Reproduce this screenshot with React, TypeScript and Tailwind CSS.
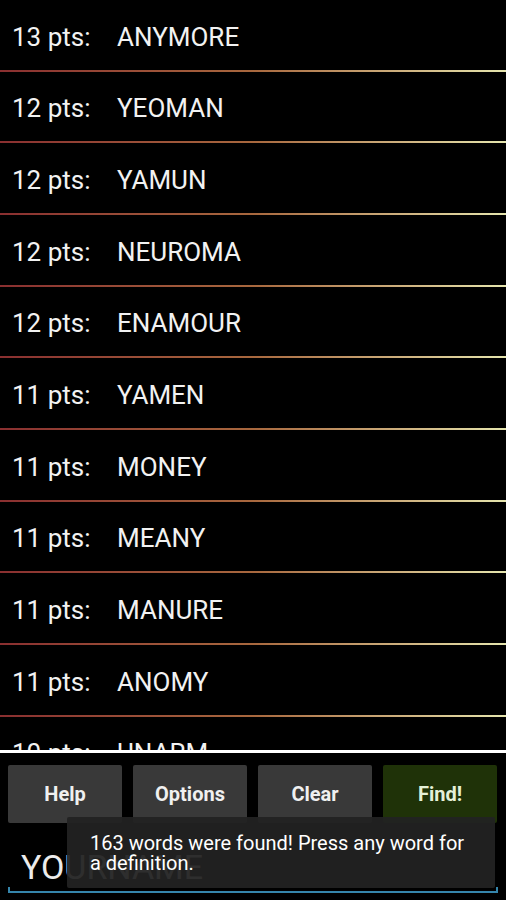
import { useState } from 'react';

// word list as shown after a search, already sorted by score
const WORDS: [number, string][] = [
  [13, 'ANYMORE'],
  [12, 'YEOMAN'],
  [12, 'YAMUN'],
  [12, 'NEUROMA'],
  [12, 'ENAMOUR'],
  [11, 'YAMEN'],
  [11, 'MONEY'],
  [11, 'MEANY'],
  [11, 'MANURE'],
  [11, 'ANOMY'],
  [10, 'UNARM'],
];

const font = { fontFamily: 'Roboto, "Noto Sans", sans-serif' };

function WordRow({ pts, word }: { pts: number; word: string }) {
  return (
    <div>
      <div className="h-[69.67px] flex items-center pl-[12px] pt-[4px] text-[26px] leading-[26px] text-[#f2f2f2]">
        <span className="w-[105px]">{pts} pts:</span>
        <span>{word}</span>
      </div>
      <div className="h-[2px] bg-gradient-to-r from-[#8a2f30] via-[#a8683e] to-[#e6e6ae]" />
    </div>
  );
}

export default function App() {
  const [letters] = useState('YOURNAME');

  return (
    <div className="w-[506px] h-[900px] bg-black relative overflow-hidden" style={font}>
      {/* ── Results list ───────────────────────────────────────── */}
      <div className="h-[750px] overflow-hidden">
        {WORDS.map(([pts, word], i) => (
          <WordRow key={i} pts={pts} word={word} />
        ))}
      </div>
      <div className="h-[3px] bg-white" />

      {/* ── Buttons ────────────────────────────────────────────── */}
      <div className="flex gap-[11px] pl-[8px] pr-[9px] pt-[12px]">
        {['Help', 'Options', 'Clear'].map((label) => (
          <button
            key={label}
            className="flex-1 h-[58px] rounded-[2px] bg-[#393939] text-[20px] font-bold text-[#f0f0f0]"
          >
            {label}
          </button>
        ))}
        <button className="flex-1 h-[58px] rounded-[2px] bg-[#1f3208] text-[20px] font-bold text-[#e4f0d8]">
          Find!
        </button>
      </div>

      {/* ── Letters input ──────────────────────────────────────── */}
      <div className="mx-[8px] h-[70px] relative flex items-end pb-[9px] pl-[13px]">
        <span className="text-[34px] leading-[34px] text-[#ececec]">{letters}</span>
        <div className="absolute left-0 right-0 bottom-0 h-[6px] border-x-2 border-b-2 border-[#3585ab]" />
      </div>

      {/* ── Toast ──────────────────────────────────────────────── */}
      <div className="absolute left-[67px] top-[817px] w-[428px] h-[71px] rounded-[2px] bg-[#222222]/[0.94] pl-[23px] pt-[16px] text-[20px] leading-[20px] text-white">
        163 words were found! Press any word for
        <br />
        a definition.
      </div>
    </div>
  );
}
